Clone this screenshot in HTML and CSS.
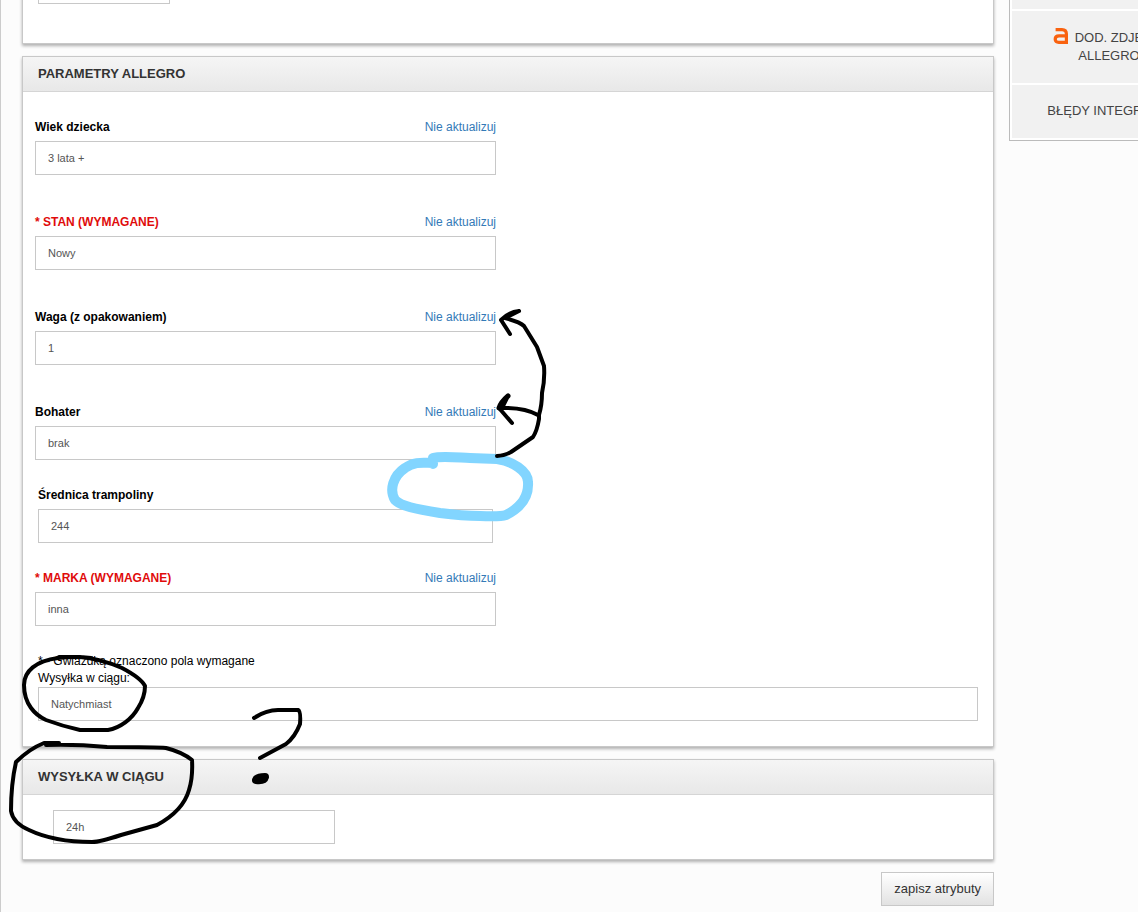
FILE: index.html
```
<!DOCTYPE html>
<html lang="pl">
<head>
  <title>Parametry Allegro</title>
  <meta charset="UTF-8">
  <meta name="viewport" content="width=device-width, initial-scale=1.0">
  <link rel="stylesheet" href="styles.css">
</head>
<body>
<div class="page">
  <main class="content">
    <section class="panel panel-top">
      <div class="panel-body">
        <input type="text" class="control control-short" aria-label="Atrybut">
      </div>
    </section>

    <section class="panel">
      <h2 class="panel-heading">PARAMETRY ALLEGRO</h2>
      <div class="params">
        <div class="field field-wide-gap">
          <div class="field-head">
            <label for="wiek">Wiek dziecka</label>
            <a href="#">Nie aktualizuj</a>
          </div>
          <input type="text" class="control" id="wiek" value="3 lata +">
        </div>
        <div class="field field-wide-gap">
          <div class="field-head">
            <label for="stan" class="required">* STAN (WYMAGANE)</label>
            <a href="#">Nie aktualizuj</a>
          </div>
          <input type="text" class="control" id="stan" value="Nowy">
        </div>
        <div class="field field-wide-gap">
          <div class="field-head">
            <label for="waga">Waga (z opakowaniem)</label>
            <a href="#">Nie aktualizuj</a>
          </div>
          <input type="text" class="control" id="waga" value="1">
        </div>
        <div class="field">
          <div class="field-head">
            <label for="bohater">Bohater</label>
            <a href="#">Nie aktualizuj</a>
          </div>
          <input type="text" class="control" id="bohater" value="brak">
        </div>
        <div class="field field-inset">
          <div class="field-head">
            <label for="srednica">Średnica trampoliny</label>
          </div>
          <input type="text" class="control" id="srednica" value="244">
        </div>
        <div class="field">
          <div class="field-head">
            <label for="marka" class="required">* MARKA (WYMAGANE)</label>
            <a href="#">Nie aktualizuj</a>
          </div>
          <input type="text" class="control" id="marka" value="inna">
        </div>
      </div>
      <div class="shipping">
        <p>* - Gwiazdką oznaczono pola wymagane</p>
        <label for="wysylka">Wysyłka w ciągu:</label>
        <input type="text" class="control" id="wysylka" value="Natychmiast">
      </div>
    </section>

    <section class="panel">
      <h2 class="panel-heading">WYSYŁKA W CIĄGU</h2>
      <div class="panel-body panel-body-inset">
        <input type="text" class="control control-third" value="24h" aria-label="Wysyłka w ciągu">
      </div>
    </section>

    <div class="actions">
      <button type="submit" class="btn">zapisz atrybuty</button>
    </div>
  </main>

  <aside class="sidebar">
    <nav class="menu">
      <a href="#" class="menu-item menu-item-first"></a>
      <a href="#" class="menu-item">
        <svg class="logo" width="16" height="16" viewBox="0 0 16 16" aria-hidden="true">
          <path d="M2.6 1.6H9Q13.4 1.6 13.4 6V16M13.4 14.4H5.8Q2.2 14.4 2.2 11.3Q2.2 7.8 6 7.8H13" fill="none" stroke="#f9620f" stroke-width="3.2"/>
        </svg>
        DOD. ZDJĘCIA<br>ALLEGRO
      </a>
      <a href="#" class="menu-item">BŁĘDY INTEGRACJI</a>
    </nav>
  </aside>

  <!-- hand-drawn notes over the form -->
  <svg class="notes" width="1138" height="912" viewBox="0 0 1138 912" aria-hidden="true">
    <path class="marker" d="M433 464V458C440 456 450 457 470 458L497 459C512 461 528 471 528 482C529 497 520 508 506 515Q500 517 480 516C468 516 455 515 440 513C415 509 401 506 395 500C389 490 393 476 405 468C415 461 424 463 433 463"/>
    <g class="pen">
      <path d="M497 456Q504 456 511 452L533 437Q537 431 539 419V415Q542 405 542 393Q545 380 544 366L537 347L524 326Q520 322 505 318"/>
      <path d="M519 311Q509 312 501 320L510 334M519 311L507 317"/>
      <path d="M538 415Q524 407 500 408"/>
      <path d="M508 396Q501 402 499 408M507 397L503 405" stroke-width="5"/>
      <path d="M499 408L512 423"/>
      <path d="M91 658Q75 656 58 658C36 661 24 671 24 685C24 704 35 715 46 720Q62 726 80 730H108C120 728 132 719 138 708Q145 697 145 686Q141 678 122 668C108 662 95 658 80 657H59"/>
      <path d="M59 743H44Q29 749 16 762Q11 784 11 811Q13 823 29 830Q54 842 92 842Q100 842 121 835L157 825Q183 811 189 790Q193 777 192 760Q182 752 166 748Q157 747 107 747Q75 744 46 745"/>
      <path d="M254 718Q266 710 278 710L298 710Q301 711 300 724Q295 737 286 744L260 758"/>
      <path d="M256 780Q257 777 265 777Q264 781 256 780Z" stroke-width="8"/>
    </g>
  </svg>
</div>
</body>
</html>
```
FILE: styles.css
```
* {
  box-sizing: border-box;
}

body {
  margin: 0;
  background-color: #fcfcfc;
  color: #000;
  font-family: "Liberation Sans", Arial, sans-serif;
  font-size: 12px;
  line-height: 17px;
}

.page {
  position: relative;
  display: flex;
  gap: 15px;
  min-height: 100vh;
  padding-left: 21px;
  border-left: 1px solid #ccc;
  overflow: hidden;
}

.content {
  flex: 1;
  min-width: 0;
}

.panel {
  margin-bottom: 12px;
  background-color: #fff;
  border: 1px solid #c8c8c8;
  box-shadow: 0 2px 3px rgba(0, 0, 0, 0.3);
}

/* scrolled partly out of view */
.panel-top {
  margin-top: -46px;
}

.panel-top .panel-body {
  padding-bottom: 39px;
}

.panel-heading {
  margin: 0;
  padding: 0 15px;
  border-bottom: 1px solid #d5d5d5;
  background: linear-gradient(#f5f5f5, #e8e8e8);
  color: #333;
  font-size: 13px;
  line-height: 34px;
}

.panel-body {
  padding: 15px;
}

.panel-body-inset {
  padding-right: 0;
  padding-left: 30px;
}

.params {
  width: 50%;
  padding: 26px 12px 0;
}

.field {
  margin-bottom: 26px;
}

.field-wide-gap {
  margin-bottom: 38px;
}

.field-inset {
  padding: 0 3px;
}

.field-head {
  display: flex;
  justify-content: space-between;
  margin-bottom: 5px;
  line-height: 18px;
}

.field-head label {
  font-weight: bold;
}

.field-head .required {
  color: #e00b0b;
}

.field-head a {
  color: #337ab7;
  text-decoration: none;
}

.control {
  display: block;
  width: 100%;
  height: 34px;
  padding: 0 12px;
  border: 1px solid #c8c8c8;
  border-radius: 0;
  background-color: #fff;
  color: #555;
  font-family: inherit;
  font-size: 11px;
}

.control-short {
  width: 132px;
}

.control-third {
  width: 30%;
}

.shipping {
  padding: 1px 15px 25px;
}

.shipping p {
  margin: 0;
}

.shipping label {
  display: block;
}

.actions {
  display: flex;
  justify-content: flex-end;
}

.btn {
  height: 34px;
  padding: 0 12px 2px;
  border: 1px solid #c8c8c8;
  background: linear-gradient(#fff, #e2e2e2);
  color: #333;
  font-family: inherit;
  font-size: 13px;
}

/* the menu runs past the right edge of the window */
.sidebar {
  flex: 0 0 129px;
  min-width: 0;
}

.menu {
  display: flex;
  flex-direction: column;
  gap: 2px;
  width: 200px;
  padding: 0 2px 2px;
  border: 1px solid #bbb;
  border-top: 0;
  background-color: #fff;
}

.menu-item {
  padding: 17px 0 18px;
  background-color: #f1f1f1;
  color: #444;
  font-size: 13px;
  line-height: 18px;
  text-align: center;
  text-decoration: none;
}

.menu-item-first {
  height: 9px;
  padding: 0;
}

.logo {
  margin-right: 2px;
  vertical-align: -2px;
}

.notes {
  position: absolute;
  top: 0;
  left: 0;
  margin-left: -1px;
  pointer-events: none;
}

.marker {
  fill: none;
  stroke: #82d5ff;
  stroke-width: 10;
  stroke-linecap: round;
  stroke-linejoin: round;
}

.pen {
  fill: none;
  stroke: #000;
  stroke-width: 4;
  stroke-linecap: round;
  stroke-linejoin: round;
}
```
